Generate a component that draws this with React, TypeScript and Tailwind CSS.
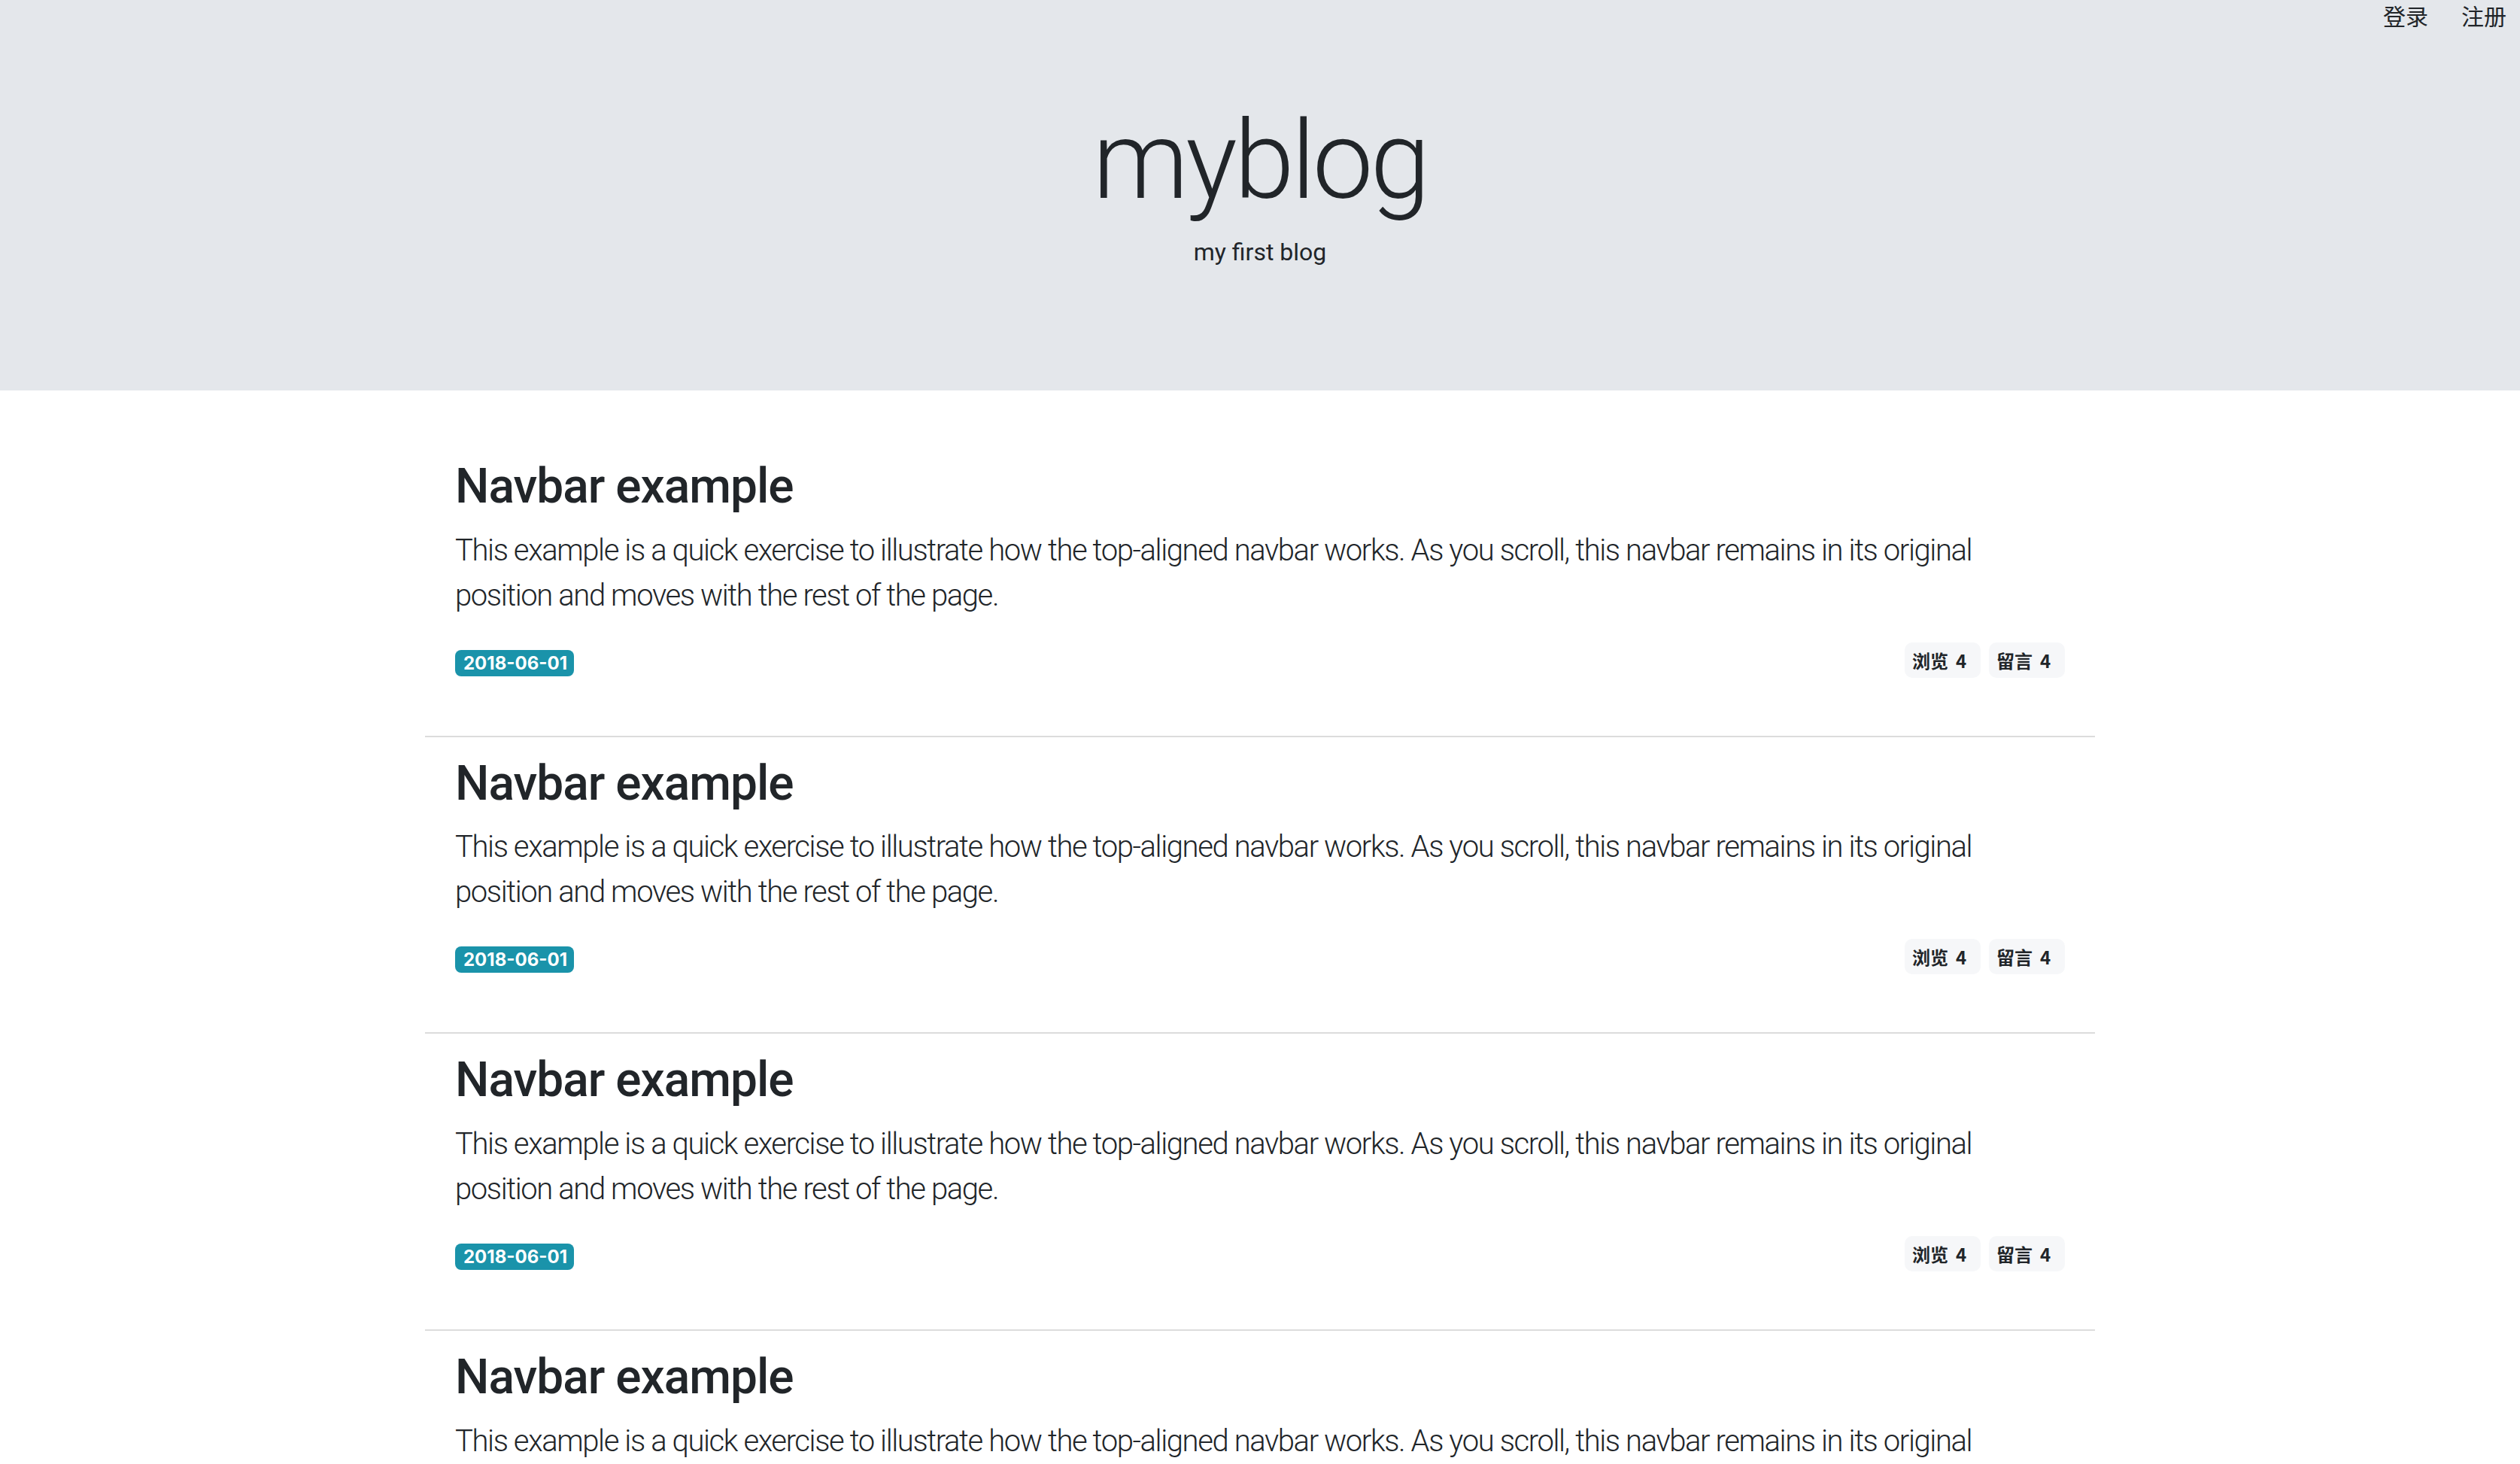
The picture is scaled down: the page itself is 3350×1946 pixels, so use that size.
const posts = [1, 2, 3, 4, 5];

function PostItem() {
  return (
    <div className="border-b-2 border-[#dcdcdc] px-[40px] pt-[24px] pb-[77px]">
      <h2 className="text-[64px] leading-[1.2] font-medium tracking-[-1px] text-[#212529]">Navbar example</h2>
      <p className="mt-[16px] text-[40px] leading-[60px] font-light tracking-[-1.4px] text-[#212529]">
        This example is a quick exercise to illustrate how the top-aligned navbar works. As you scroll, this navbar
        remains in its original position and moves with the rest of the page.
      </p>
      <div className="mt-[32px] flex items-end justify-between">
        <span className="mb-[2px] rounded-[8px] bg-[#1a93aa] pl-[11px] pr-[9px] font-['Inter',sans-serif] text-[24px] leading-[35px] font-bold text-white">
          2018-06-01
        </span>
        <div className="flex gap-[11px] font-['Noto_Sans_CJK_SC',sans-serif]">
          <span className="inline-flex w-[101px] gap-[10px] rounded-[10px] bg-[#f6f7f9] pl-[10px] text-[24px] leading-[47px] font-bold text-[#212529]">
            <span>浏览</span>
            <span>4</span>
          </span>
          <span className="inline-flex w-[101px] gap-[10px] rounded-[10px] bg-[#f6f7f9] pl-[10px] text-[24px] leading-[47px] font-bold text-[#212529]">
            <span>留言</span>
            <span>4</span>
          </span>
        </div>
      </div>
    </div>
  );
}

export default function App() {
  return (
    <div className="min-h-screen bg-white font-['Roboto','Noto_Sans_CJK_SC',sans-serif] text-[#212529]">
      {/* Jumbotron */}
      <header className="bg-[#e4e7eb]">
        <nav className="flex h-[44px] justify-end gap-[44px] pr-[18px] text-[30px] leading-[40px] font-['Noto_Sans_CJK_SC',sans-serif]">
          <a href="#">登录</a>
          <a href="#">注册</a>
        </nav>
        <div className="pt-[84px] pb-[160px] text-center">
          <h1 className="text-[144px] leading-[1.2] font-light tracking-[-4px]">myblog</h1>
          <p className="mt-[10px] text-[32px] leading-[48px]">my first blog</p>
        </div>
      </header>

      {/* Posts */}
      <main className="mx-auto mt-[66px] w-[2220px]">
        {posts.map((i) => (
          <PostItem key={i} />
        ))}
      </main>
    </div>
  );
}
